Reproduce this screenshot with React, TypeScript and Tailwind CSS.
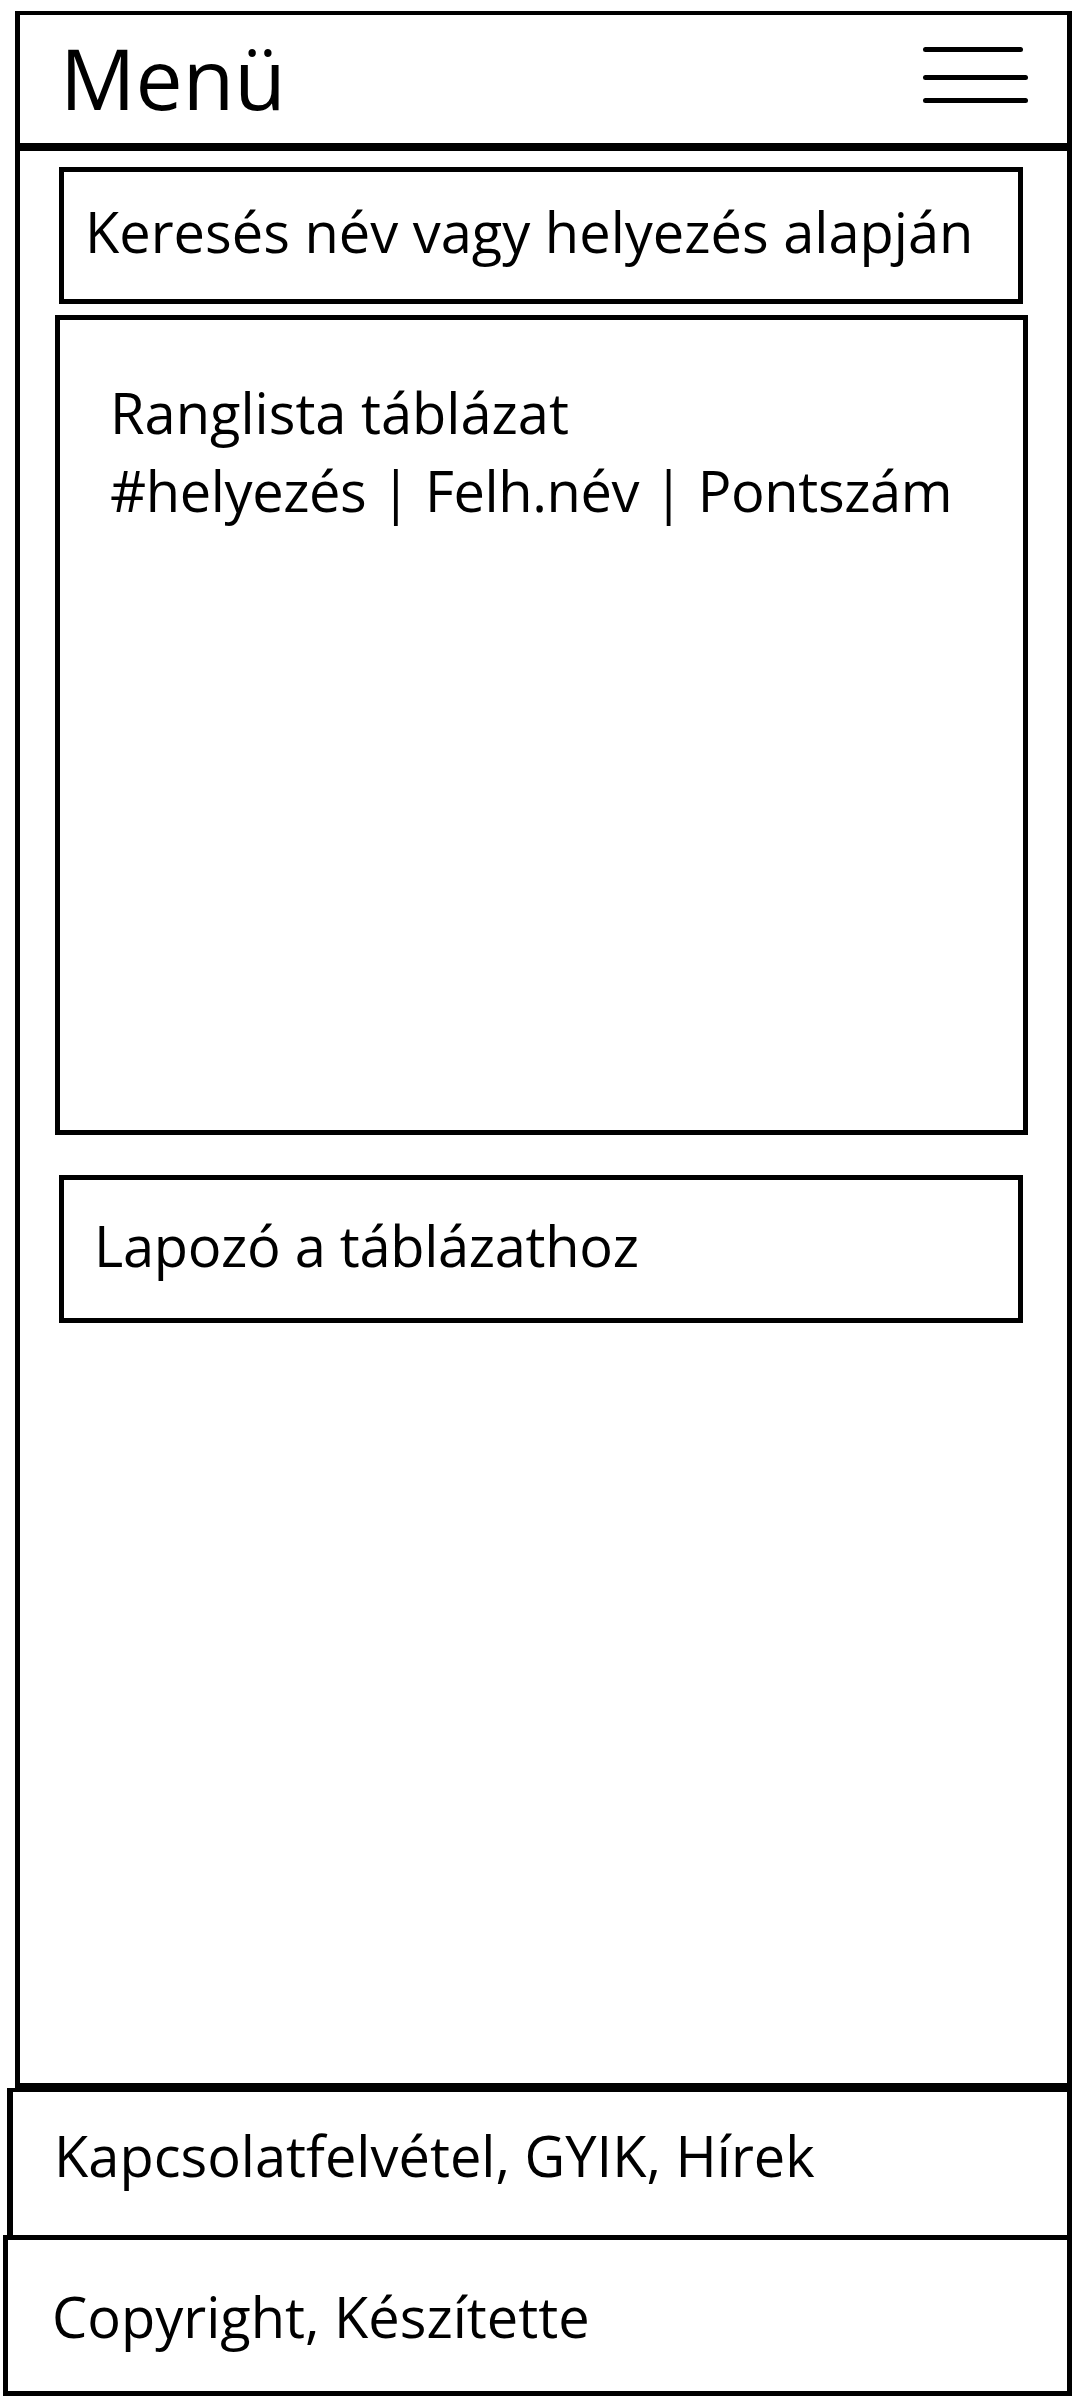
import React from "react";

const font = { fontFamily: "'Open Sans', Lato, sans-serif" };

export default function App() {
  return (
    <div className="w-[1080px] h-[2400px] bg-white text-black flex flex-col" style={font}>
      {/* Main frame */}
      <div className="mt-[11px] ml-[15px] w-[1057px] h-[2077px] border-t-4 border-x-[5px] border-b-[5px] border-black flex flex-col">
        {/* Header */}
        <div className="h-[136px] border-b-8 border-black flex justify-between items-start shrink-0">
          <div className="pl-[40px] pt-[21px] text-[84px] leading-none">Menü</div>
          <svg className="mt-[30px] mr-[37px]" width="110" height="60" viewBox="0 0 110 60">
            <g stroke="black" strokeWidth="5" strokeLinecap="round">
              <line x1="5.5" y1="4.5" x2="100.5" y2="4.5" />
              <line x1="5.5" y1="32.5" x2="105.5" y2="32.5" />
              <line x1="5.5" y1="55.5" x2="105.5" y2="55.5" />
            </g>
          </svg>
        </div>

        {/* Search box */}
        <div className="mt-[16px] ml-[39px] w-[964px] h-[137px] border-[5px] border-black pl-[21px] pt-[31px] text-[56px] leading-none shrink-0">
          Keresés név vagy helyezés alapján
        </div>

        {/* Table box */}
        <div className="mt-[11px] ml-[35px] w-[973px] h-[820px] border-[5px] border-black pl-[50px] pt-[53px] text-[56px] leading-[78px] shrink-0">
          <div>Ranglista táblázat</div>
          <div className="tracking-[-0.4px]">#helyezés | Felh.név | Pontszám</div>
        </div>

        {/* Pager */}
        <div className="mt-[40px] ml-[39px] w-[964px] h-[148px] border-[5px] border-black pl-[30px] pt-[37px] text-[56px] leading-none tracking-[-0.3px] shrink-0">
          Lapozó a táblázathoz
        </div>
      </div>

      {/* Footer 1 */}
      <div className="ml-[7px] w-[1065px] h-[147px] border-t-4 border-l-[6px] border-r-[5px] border-black pl-[41px] pt-[35px] text-[56px] leading-none shrink-0">
        Kapcsolatfelvétel, GYIK, Hírek
      </div>

      {/* Footer 2 */}
      <div className="ml-[3px] w-[1069px] h-[161px] border-[5px] border-black pl-[44px] pt-[48px] text-[56px] leading-none shrink-0">
        Copyright, Készítette
      </div>
    </div>
  );
}
